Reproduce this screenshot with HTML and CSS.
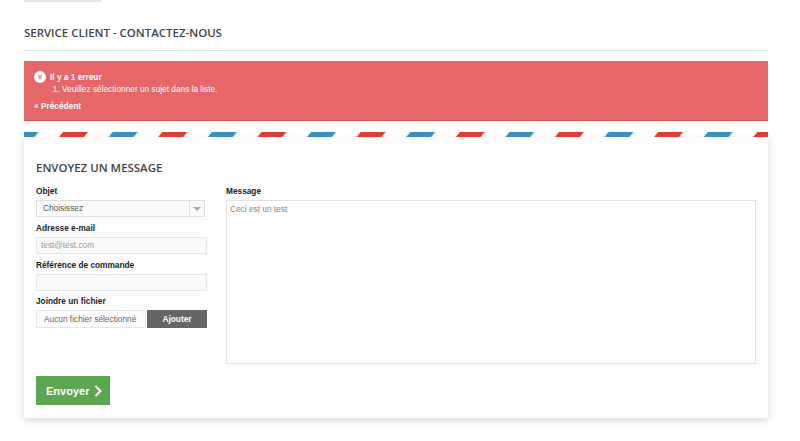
FILE: index.html
```html
<!DOCTYPE html>
<html lang="fr">
<head>
    <meta charset="UTF-8">
    <title>Service client - Contactez-nous</title>
    <link rel="stylesheet" href="styles.css">
</head>
<body>
    <div class="top-tab"></div>
    <h1 class="page-title">SERVICE CLIENT - CONTACTEZ-NOUS</h1>

    <div class="alert">
        <p class="alert-title">
            <svg class="alert-icon" width="12" height="12" viewBox="0 0 12 12">
                <circle cx="6" cy="6" r="6" fill="#fff"/>
                <path d="M4.2 4.2l3.6 3.6M7.8 4.2l-3.6 3.6" stroke="#e9a0a0" stroke-width="1.6"/>
            </svg>
            Il y a 1 erreur
        </p>
        <ol class="alert-list">
            <li>Veuillez sélectionner un sujet dans la liste.</li>
        </ol>
        <a class="alert-back" href="#">« Précédent</a>
    </div>

    <svg class="stripes" width="744" height="5">
        <defs>
            <pattern id="airmail" width="99.17" height="5" patternUnits="userSpaceOnUse" x="-14.5">
                <polygon points="4,0 29,0 25,5 0,5" fill="#3b8ec2"/>
                <polygon points="53.6,0 78.6,0 74.6,5 49.6,5" fill="#dd3c2f"/>
            </pattern>
        </defs>
        <rect width="744" height="5" fill="url(#airmail)"/>
    </svg>

    <div class="panel">
        <h2 class="panel-title">ENVOYEZ UN MESSAGE</h2>
        <div class="form-cols">
            <div class="col-left">
                <label>Objet</label>
                <div class="select">
                    <span class="select-value">Choisissez</span>
                    <span class="select-arrow"></span>
                </div>
                <label>Adresse e-mail</label>
                <div class="input muted">test@test.com</div>
                <label>Référence de commande</label>
                <div class="input"></div>
                <label>Joindre un fichier</label>
                <div class="file">
                    <span class="file-name">Aucun fichier sélectionné</span>
                    <span class="file-btn">Ajouter</span>
                </div>
            </div>
            <div class="col-right">
                <label>Message</label>
                <div class="textarea">Ceci est un test</div>
            </div>
        </div>
        <button class="send">Envoyer
            <svg width="8" height="12" viewBox="0 0 8 12">
                <path d="M1.5 1l5 5-5 5" fill="none" stroke="#fff" stroke-width="2"/>
            </svg>
        </button>
    </div>
</body>
</html>
```

FILE: styles.css
```css
/* General */
html, body {
    height: 441px;
    overflow: hidden;
}

body {
    margin: 0;
    padding: 0 32px 0 24px;
    background-color: #fff;
    color: #222;
    font-family: "Liberation Sans", Arial, sans-serif;
    font-size: 8.3px;
}

.top-tab {
    width: 77px;
    height: 1px;
    background-color: #e6e6e6;
    box-shadow: 0 1px 1px #ddd;
}

.page-title {
    margin: 0;
    padding: 24px 0 10px;
    border-bottom: 1px solid #e2e2e2;
    color: #444;
    font-family: "Open Sans", sans-serif;
    font-size: 11.45px;
    line-height: 15px;
    font-weight: 600;
}

/* Error box */
.alert {
    box-sizing: border-box;
    height: 60px;
    margin-top: 10px;
    padding: 10px;
    background-color: #e56767;
    border-bottom: 1px solid #dd5050;
    color: #fff;
}

.alert-title {
    display: flex;
    align-items: center;
    gap: 4px;
    margin: 0;
    font-weight: bold;
    line-height: 11px;
}

.alert-list {
    margin: 0;
    padding-left: 28px;
    line-height: 12px;
}

.alert-back {
    display: block;
    margin-top: 6px;
    color: #fff;
    font-weight: bold;
    line-height: 11px;
    text-decoration: none;
}

.stripes {
    display: block;
    margin-top: 11px;
}

/* Contact form */
.panel {
    box-sizing: border-box;
    height: 281px;
    padding: 23px 12px 0;
    background-color: #fdfdfd;
    box-shadow: 0 3px 8px rgba(0, 0, 0, 0.15);
}

.panel-title {
    margin: 0 0 10px;
    color: #444;
    font-family: "Open Sans", sans-serif;
    font-size: 11.45px;
    line-height: 16px;
    font-weight: 600;
}

.form-cols {
    display: flex;
    gap: 19px;
    height: 190px;
}

.col-left {
    width: 171px;
}

.col-right {
    flex: 1;
}

label {
    display: block;
    font-weight: bold;
    line-height: 11px;
    margin-bottom: 3px;
}

.select {
    display: flex;
    box-sizing: border-box;
    width: 169px;
    height: 17px;
    margin-bottom: 6px;
    border: 1px solid #e0e0e0;
    background-color: #fafafa;
    color: #555;
    line-height: 15px;
}

.select-value {
    flex: 1;
    padding-left: 6px;
}

.select-arrow {
    position: relative;
    width: 14px;
    border-left: 1px solid #e0e0e0;
}

.select-arrow::after {
    content: "";
    position: absolute;
    left: 3px;
    top: 6px;
    border-left: 4px solid transparent;
    border-right: 4px solid transparent;
    border-top: 4px solid #aaa;
}

.input {
    box-sizing: border-box;
    height: 17px;
    margin-bottom: 5.5px;
    padding-left: 4px;
    border: 1px solid #e6e6e6;
    background-color: #fafafa;
    line-height: 15px;
}

.muted {
    color: #999;
}

.file {
    display: flex;
    height: 18px;
    line-height: 18px;
}

.file-name {
    box-sizing: border-box;
    width: 110px;
    padding-left: 7px;
    border: 1px solid #e6e6e6;
    line-height: 16px;
    color: #666;
}

.file-btn {
    flex: 1;
    margin-left: 1px;
    background-color: #666;
    color: #fff;
    font-weight: bold;
    text-align: center;
}

.textarea {
    box-sizing: border-box;
    height: 164px;
    padding: 3px;
    border: 1px solid #e2e2e2;
    background-color: #fff;
    color: #888;
    line-height: 11px;
}

.send {
    display: flex;
    align-items: center;
    gap: 5px;
    width: 74px;
    height: 29px;
    padding: 0 0 0 10px;
    border: none;
    background-color: #5da651;
    color: #fff;
    font-family: "Liberation Sans", Arial, sans-serif;
    font-size: 11px;
    font-weight: bold;
}
```
